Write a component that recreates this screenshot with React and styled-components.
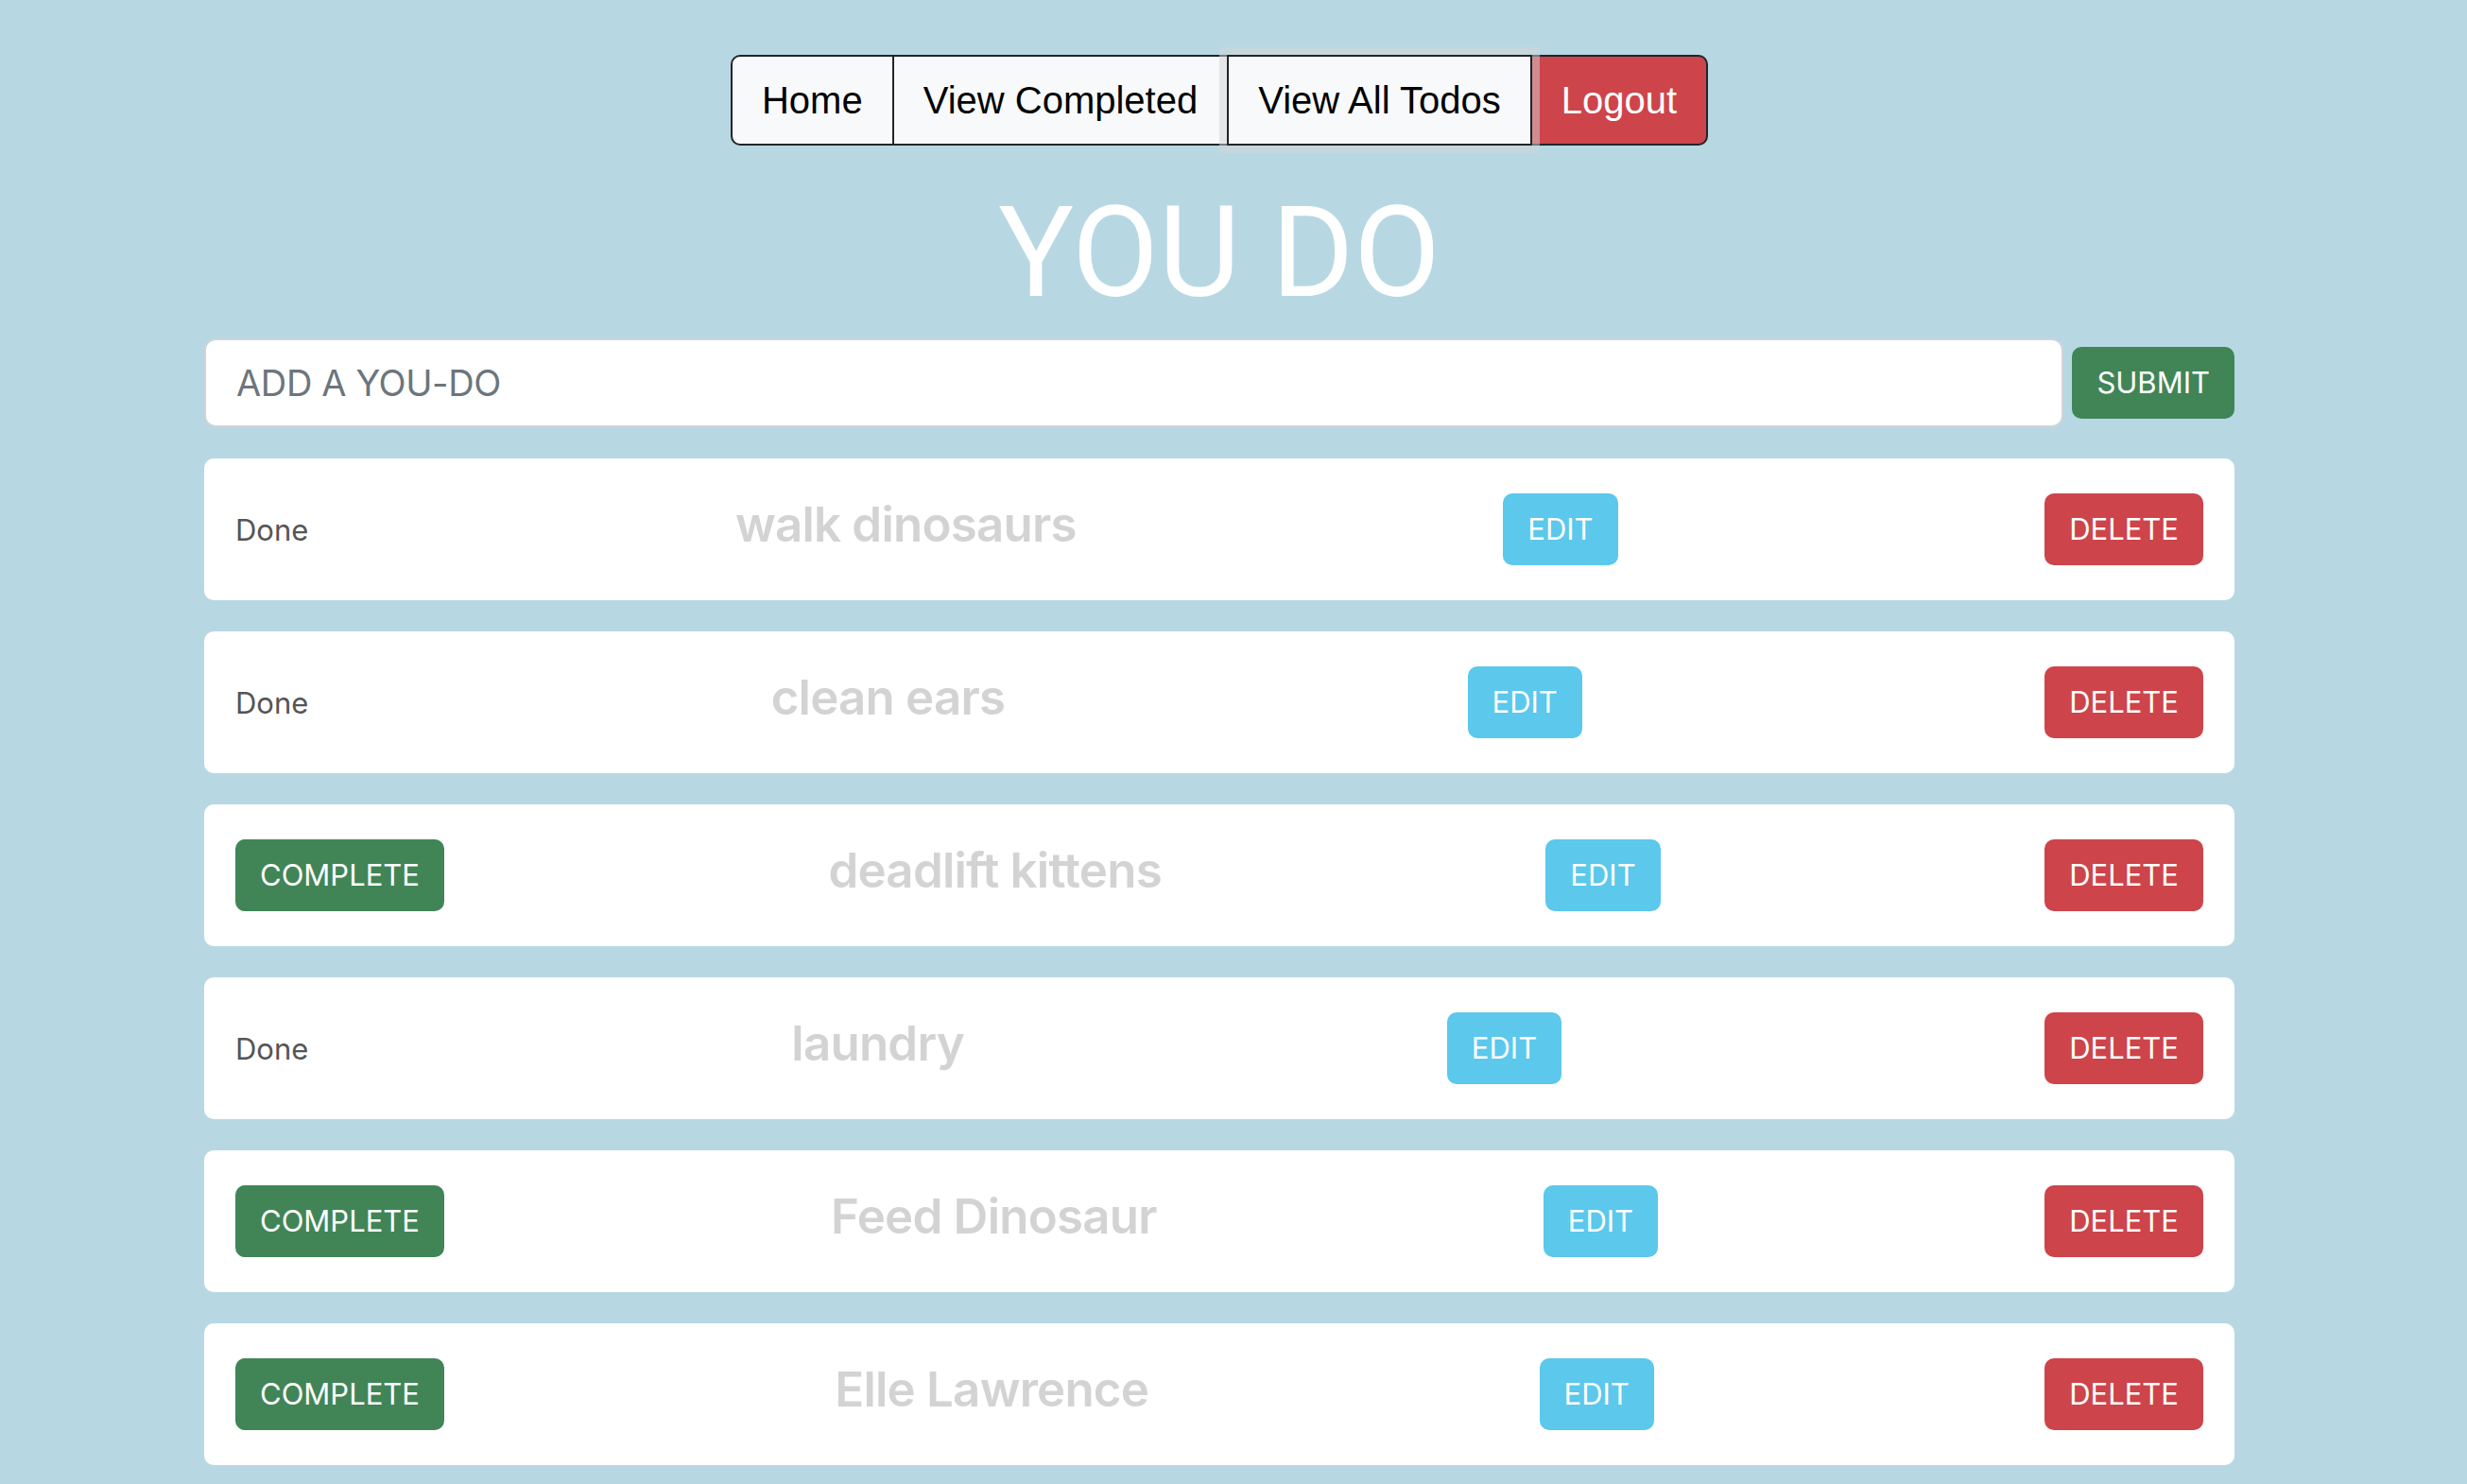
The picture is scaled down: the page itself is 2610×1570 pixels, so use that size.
import React from "react";
import styled, { createGlobalStyle, css } from "styled-components";

const GlobalStyle = createGlobalStyle`
  html, body {
    margin: 0;
    padding: 0;
    background: #b7d8e3;
    overflow: hidden;
  }
  body {
    font-family: Inter, "Noto Sans", sans-serif;
  }
`;

const todos = [
  { name: "walk dinosaurs", done: true },
  { name: "clean ears", done: true },
  { name: "deadlift kittens", done: false },
  { name: "laundry", done: true },
  { name: "Feed Dinosaur", done: false },
  { name: "Elle Lawrence", done: false },
];

function App() {
  return (
    <>
      <GlobalStyle />
      <StyledPage>
        <NavGroup>
          <NavButton first>Home</NavButton>
          <NavButton>View Completed</NavButton>
          <NavButton focused>View All Todos</NavButton>
          <NavButton danger last>
            Logout
          </NavButton>
        </NavGroup>
        <Title>YOU DO</Title>
        <Content>
          <FormRow>
            <TodoInput placeholder="ADD A YOU-DO" />
            <Button variant="success">SUBMIT</Button>
          </FormRow>
          {todos.map((todo) => (
            <TodoCard key={todo.name}>
              {todo.done ? (
                <DoneText>Done</DoneText>
              ) : (
                <Button variant="success">COMPLETE</Button>
              )}
              <TodoName>{todo.name}</TodoName>
              <Button variant="info">EDIT</Button>
              <Button variant="danger">DELETE</Button>
            </TodoCard>
          ))}
        </Content>
      </StyledPage>
    </>
  );
}

const StyledPage = styled.div`
  width: 2580px;
  padding-top: 58px;
  display: flex;
  flex-direction: column;
  align-items: center;
`;

const NavGroup = styled.div`
  display: flex;
`;

const NavButton = styled.button`
  position: relative;
  font-family: "Liberation Sans", Arial, sans-serif;
  font-size: 40px;
  line-height: 60px;
  padding: 16px 31px;
  border: 2px solid #212529;
  background: #f8f9fa;
  color: #000;
  margin-left: -2px;
  border-radius: 0;
  ${(p) =>
    p.first &&
    css`
      margin-left: 0;
      border-radius: 10px 0 0 10px;
    `}
  ${(p) =>
    p.last &&
    css`
      border-radius: 0 10px 10px 0;
    `}
  ${(p) =>
    p.danger &&
    css`
      background: #cd444b;
      color: #fff;
    `}
  ${(p) =>
    p.focused &&
    css`
      z-index: 1;
      box-shadow: 0 0 0 8px rgba(211, 212, 213, 0.5);
    `}
`;

const Title = styled.h1`
  margin: 47px 0 24px;
  font-family: Roboto, Inter, sans-serif;
  font-weight: 400;
  font-size: 133px;
  line-height: 1;
  color: #fff;
`;

const Content = styled.div`
  width: 2148px;
  display: flex;
  flex-direction: column;
  gap: 33px;
`;

const FormRow = styled.div`
  display: flex;
  align-items: center;
  gap: 9px;
`;

const TodoInput = styled.input`
  flex: 1;
  height: 94px;
  box-sizing: border-box;
  padding: 0 32px;
  border: 2px solid #ced4da;
  border-radius: 12px;
  font-family: Inter, sans-serif;
  font-size: 38px;
  letter-spacing: -0.01em;
  color: #212529;
  background: #fff;
  outline: none;
  &::placeholder {
    color: #6c757d;
  }
`;

const variants = {
  success: "#418557",
  info: "#5bc8ec",
  danger: "#cd444b",
};

const Button = styled.button`
  font-family: Inter, sans-serif;
  font-size: 31px;
  line-height: 48px;
  padding: 12px 24px;
  border: 2px solid ${(p) => variants[p.variant]};
  border-radius: 10px;
  background: ${(p) => variants[p.variant]};
  color: #fff;
  white-space: nowrap;
`;

const TodoCard = styled.div`
  height: 150px;
  box-sizing: border-box;
  padding: 0 33px;
  background: #fff;
  border-radius: 10px;
  display: flex;
  align-items: center;
  justify-content: space-between;
`;

const DoneText = styled.span`
  font-size: 31px;
  color: #555;
`;

const TodoName = styled.h4`
  margin: 0 0 12px;
  font-size: 51px;
  font-weight: 600;
  letter-spacing: -0.015em;
  color: #d3d3d3;
`;

export default App;
